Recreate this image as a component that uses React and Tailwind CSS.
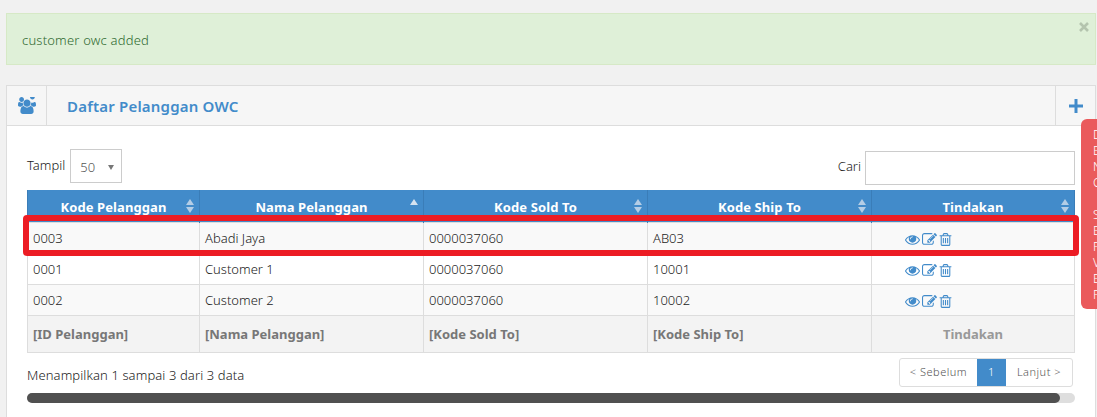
import React from 'react';

const columns = ['Kode Pelanggan', 'Nama Pelanggan', 'Kode Sold To', 'Kode Ship To', 'Tindakan'];
const footer = ['[ID Pelanggan]', '[Nama Pelanggan]', '[Kode Sold To]', '[Kode Ship To]'];
const rows = [
  ['0003', 'Abadi Jaya', '0000037060', 'AB03'],
  ['0001', 'Customer 1', '0000037060', '10001'],
  ['0002', 'Customer 2', '0000037060', '10002'],
];
const sideLetters = ['D', 'E', 'N', 'C', '\u00a0', 'S', 'E', 'F', 'V', 'E', 'F'];

// old font awesome glyphs, the newer ones in the icon packages look different
const UsersIcon = () => (
  <svg viewBox="0 0 1920 1792" width="18" height="17" fill="currentColor">
    <path d="M593 896q-162 5-265 128h-134q-82 0-138-40.5t-56-118.5q0-353 124-353 6 0 43.5 21t97.5 42.5 119 21.5q67 0 133-23-5 37-5 66 0 139 81 256zm1071 637q0 120-73 189.5t-194 69.5h-874q-121 0-194-69.5t-73-189.5q0-53 3.5-103.5t14-109 26.5-108.5 43-97.5 62-81 85.5-53.5 111.5-20q10 0 43 21.5t73 48 107 48 135 21.5 135-21.5 107-48 73-48 43-21.5q61 0 111.5 20t85.5 53.5 62 81 43 97.5 26.5 108.5 14 109 3.5 103.5zm-1024-1277q0 106-75 181t-181 75-181-75-75-181 75-181 181-75 181 75 75 181zm704 384q0 159-112.5 271.5t-271.5 112.5-271.5-112.5-112.5-271.5 112.5-271.5 271.5-112.5 271.5 112.5 112.5 271.5zm576 225q0 78-56 118.5t-138 40.5h-134q-103-123-265-128 81-117 81-256 0-29-5-66 66 23 133 23 59 0 119-21.5t97.5-42.5 43.5-21q124 0 124 353zm-128-865q0 106-75 181t-181 75-181-75-75-181 75-181 181-75 181 75 75 181z" />
  </svg>
);

const EyeIcon = () => (
  <svg viewBox="0 0 1792 1792" width="15" height="15" fill="currentColor">
    <path d="M1664 960q-152-236-381-353 61 104 61 225 0 185-131.5 316.5t-316.5 131.5-316.5-131.5-131.5-316.5q0-121 61-225-229 117-381 353 133 205 333.5 326.5t434.5 121.5 434.5-121.5 333.5-326.5zm-720-384q0-20-14-34t-34-14q-125 0-214.5 89.5t-89.5 214.5q0 20 14 34t34 14 34-14 14-34q0-86 61-147t147-61q20 0 34-14t14-34zm848 384q0 34-20 69-140 230-376.5 368.5t-499.5 138.5-499.5-139-376.5-368q-20-35-20-69t20-69q140-229 376.5-368t499.5-139 499.5 139 376.5 368q20 35 20 69z" />
  </svg>
);

const EditIcon = () => (
  <svg viewBox="0 0 1792 1792" width="15" height="15" fill="currentColor">
    <path d="M888 1184l116-116-152-152-116 116v56h96v96h56zm440-720q-16-16-33 1l-350 350q-17 17-1 33t33-1l350-350q17-17 1-33zm80 594v190q0 119-84.5 203.5t-203.5 84.5h-832q-119 0-203.5-84.5t-84.5-203.5v-832q0-119 84.5-203.5t203.5-84.5h832q63 0 117 25 15 7 18 23 3 17-9 29l-49 49q-14 14-32 8-23-6-45-6h-832q-66 0-113 47t-47 113v832q0 66 47 113t113 47h832q66 0 113-47t47-113v-126q0-13 9-22l64-64q15-15 35-7t20 29zm-96-738l288 288-672 672h-288v-288zm444 132l-92 92-288-288 92-92q28-28 68-28t68 28l152 152q28 28 28 68t-28 68z" />
  </svg>
);

const TrashIcon = () => (
  <svg viewBox="0 0 1792 1792" width="15" height="15" fill="currentColor">
    <path d="M704 736v576q0 14-9 23t-23 9h-64q-14 0-23-9t-9-23v-576q0-14 9-23t23-9h64q14 0 23 9t9 23zm256 0v576q0 14-9 23t-23 9h-64q-14 0-23-9t-9-23v-576q0-14 9-23t23-9h64q14 0 23 9t9 23zm256 0v576q0 14-9 23t-23 9h-64q-14 0-23-9t-9-23v-576q0-14 9-23t23-9h64q14 0 23 9t9 23zm128 724v-948h-896v948q0 22 7 40.5t14.5 27 10.5 8.5h832q3 0 10.5-8.5t14.5-27 7-40.5zm-672-1076h448l-48-117q-7-9-17-11h-317q-10 2-17 11zm928 32v64q0 14-9 23t-23 9h-96v948q0 83-47 143.5t-113 60.5h-832q-66 0-113-58.5t-47-141.5v-952h-96q-14 0-23-9t-9-23v-64q0-14 9-23t23-9h309l70-167q15-37 54-63t79-26h320q40 0 79 26t54 63l70 167h309q14 0 23 9t9 23z" />
  </svg>
);

const PlusIcon = () => (
  <svg viewBox="0 0 14 14" width="14" height="14" fill="currentColor">
    <path d="M5.5 0h3v5.5H14v3H8.5V14h-3V8.5H0v-3h5.5z" />
  </svg>
);

const CloseIcon = () => (
  <svg viewBox="0 0 10 10" width="10" height="10" fill="none" stroke="currentColor" strokeWidth="2.6">
    <path d="M1 1l8 8M9 1l-8 8" />
  </svg>
);

const SortIcon = ({ active }) => (
  <span className="absolute right-[5px] top-[9px] flex flex-col gap-[2px]">
    <span className={`w-0 h-0 border-x-[4px] border-x-transparent border-b-[6px] ${active ? 'border-b-[#d5e2f0]' : 'border-b-[#b4cde6]'}`} />
    <span className={`w-0 h-0 border-x-[4px] border-x-transparent border-t-[6px] ${active ? 'border-t-transparent' : 'border-t-[#b4cde6]'}`} />
  </span>
);

export default function App() {
  return (
    <div className="relative h-[417px] overflow-hidden bg-[#f1f1f1] pl-[6px] pr-[1px] pt-[13px] font-['Noto_Sans',sans-serif] text-[13px] font-light text-[#222]">
      <div className="relative h-[52px] border border-[#d6e9c6] bg-[#dff0d8] pl-[15px] pt-[17px] leading-[18px] tracking-[0.2px] text-[#2f6a30]">
        customer owc added
        <span className="absolute right-[6px] top-[8px] text-[#b4c4ae]">
          <CloseIcon />
        </span>
      </div>

      <div className="mt-[20px] h-[340px] border border-[#ddd] bg-white">
        <div className="flex h-[40px] border-b border-[#ddd] bg-[#f6f6f6] text-[#428bca]">
          <div className="flex w-[40px] items-center justify-center border-r border-[#ddd]">
            <UsersIcon />
          </div>
          <div className="flex-1 pl-[20px] text-[15px] font-semibold leading-[41px] tracking-[0.2px]">Daftar Pelanggan OWC</div>
          <div className="flex w-[40px] items-center justify-center border-l border-[#ddd]">
            <PlusIcon />
          </div>
        </div>

        <div className="px-[20px]">
          <div className="flex h-[64px] items-start justify-between pt-[24px]">
            <div className="flex items-start">
              <span className="pt-[6px] leading-[18px]">Tampil</span>
              <div className="-mt-px ml-[5px] flex h-[34px] w-[52px] items-center justify-between border border-[#ccc] pl-[9px] pr-[7px] pt-[3px] text-[#555]">
                50
                <span className="h-0 w-0 border-x-[3px] border-t-[5px] border-x-transparent border-t-[#777]" />
              </div>
            </div>
            <div className="flex items-start">
              <span className="pr-[4px] pt-[7px] leading-[18px]">Cari</span>
              <div className="mt-[1px] h-[34px] w-[210px] border border-[#ccc] bg-white" />
            </div>
          </div>

          <table className="w-[1047px] table-fixed border-collapse">
            <colgroup>
              <col className="w-[172px]" />
              <col className="w-[224px]" />
              <col className="w-[224px]" />
              <col className="w-[224px]" />
              <col className="w-[203px]" />
            </colgroup>
            <thead>
              <tr className="h-[32px] bg-[#428bca] text-white">
                {columns.map((c, i) => (
                  <th key={c} className="relative border-x border-[#3a7db8] pt-[3px] text-center text-[13px] font-bold tracking-[0.1px]">
                    {c}
                    <SortIcon active={i === 1} />
                  </th>
                ))}
              </tr>
            </thead>
            <tbody>
              {rows.map((r, i) => (
                <tr key={r[0]} className={`h-[31px] ${i === 1 ? 'bg-white' : 'bg-[#f9f9f9]'}`}>
                  {r.map((v) => (
                    <td key={v} className="border border-[#ddd] px-[5px] pt-[3px]">{v}</td>
                  ))}
                  <td className="border border-[#ddd] pl-[33px] pt-[3px]">
                    <div className="flex items-center gap-[2px] text-[#428bca]">
                      <EyeIcon />
                      <EditIcon />
                      <span className="-ml-[1px]">
                        <TrashIcon />
                      </span>
                    </div>
                  </td>
                </tr>
              ))}
            </tbody>
            <tfoot>
              <tr className="h-[37px] bg-[#f3f3f3] font-bold text-[#777]">
                {footer.map((f) => (
                  <td key={f} className="border border-[#ddd] px-[5px] pt-[3px]">{f}</td>
                ))}
                <td className="border border-[#ddd] pt-[3px] text-center text-[#999]">Tindakan</td>
              </tr>
            </tfoot>
          </table>

          <div className="flex h-[40px] w-[1048px] items-start justify-between">
            <span className="pt-[13px] leading-[18px] tracking-[0.1px]">Menampilkan 1 sampai 3 dari 3 data</span>
            <div className="mr-[2px] mt-[5px] flex h-[29px] overflow-hidden rounded-[3px] border border-[#ddd] text-[11px] tracking-[0.5px] text-[#555]">
              <span className="flex w-[77px] items-center justify-center">&lt; Sebelum</span>
              <span className="flex w-[29px] items-center justify-center bg-[#428bca] text-white">1</span>
              <span className="flex w-[66px] items-center justify-center">Lanjut &gt;</span>
            </div>
          </div>

          <div className="h-[10px] w-[1048px] rounded-full bg-[#dedede]">
            <div className="h-[10px] w-[1033px] rounded-full bg-[#505050]" />
          </div>
        </div>
      </div>

      {/* red box drawn over the first row */}
      <div className="absolute left-[23px] top-[215px] h-[41px] w-[1056px] rounded-[4px] border-[6px] border-[#ec1c24]" />

      {/* feedback tab cut off by the window edge */}
      <div className="absolute left-[1081px] top-[119px] h-[190px] w-[16px] overflow-hidden rounded-l-[6px] bg-[#ea5a5c] pl-[12px] pt-[8px] text-[12px] leading-[16px] text-white">
        {sideLetters.map((l, i) => (
          <div key={i}>{l}</div>
        ))}
      </div>
    </div>
  );
}
